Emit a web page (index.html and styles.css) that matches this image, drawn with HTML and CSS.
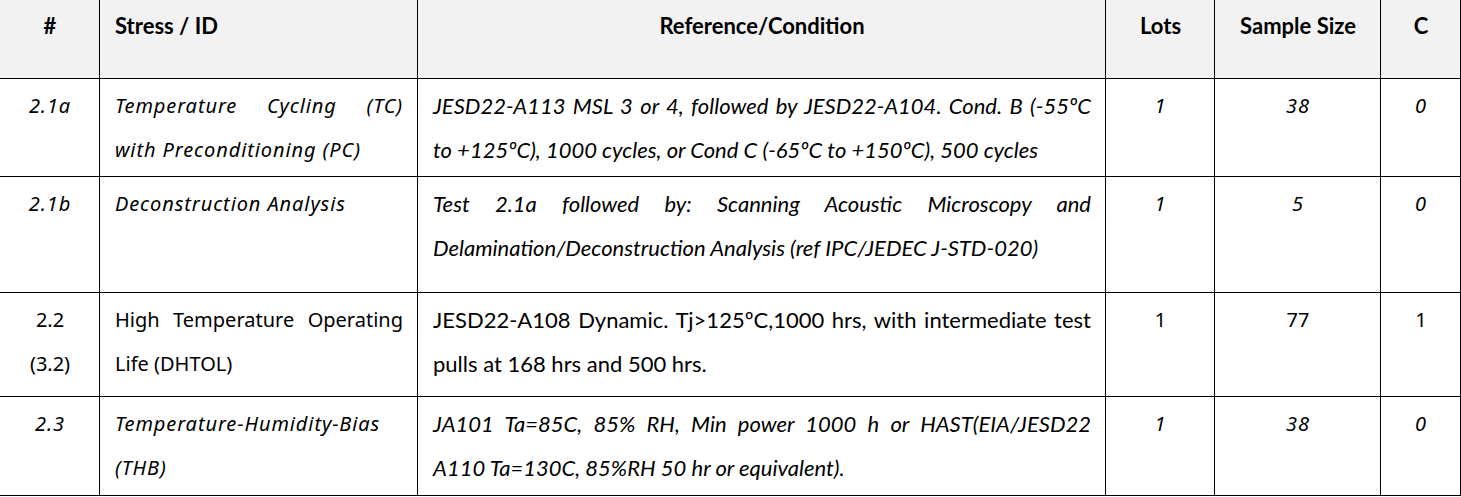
FILE: index.html
```html
<!DOCTYPE html>
<html>
<head>
<meta charset="utf-8">
<link rel="stylesheet" href="styles.css">
</head>
<body>
<table class="qual">
  <colgroup>
    <col class="c-num"><col class="c-stress"><col class="c-ref"><col class="c-lots"><col class="c-size"><col class="c-c">
  </colgroup>
  <thead>
    <tr class="row-head">
      <th class="center">#</th>
      <th class="left">Stress / ID</th>
      <th class="center">Reference/Condition</th>
      <th class="center">Lots</th>
      <th class="center">Sample Size</th>
      <th class="center">C</th>
    </tr>
  </thead>
  <tbody>
    <tr class="row-1 it">
      <td class="num">2.1a</td>
      <td class="stress">Temperature Cycling (TC) with Preconditioning (PC)</td>
      <td class="ref">JESD22-A113 MSL 3 or 4, followed by JESD22-A104. Cond. B (-55ºC to +125ºC), 1000 cycles, or Cond C (-65ºC to +150ºC), 500 cycles</td>
      <td class="num">1</td>
      <td class="num">38</td>
      <td class="num">0</td>
    </tr>
    <tr class="row-2 it">
      <td class="num">2.1b</td>
      <td class="stress">Deconstruction Analysis</td>
      <td class="ref">Test 2.1a followed by: Scanning Acoustic Microscopy and Delamination/Deconstruction Analysis (ref IPC/JEDEC J-STD-020)</td>
      <td class="num">1</td>
      <td class="num">5</td>
      <td class="num">0</td>
    </tr>
    <tr class="row-3">
      <td class="num">2.2<br>(3.2)</td>
      <td class="stress">High Temperature Operating Life (DHTOL)</td>
      <td class="ref">JESD22-A108 Dynamic. Tj&gt;125ºC,1000 hrs, with intermediate test pulls at 168 hrs and 500 hrs.</td>
      <td class="num">1</td>
      <td class="num">77</td>
      <td class="num">1</td>
    </tr>
    <tr class="row-4 it">
      <td class="num">2.3</td>
      <td class="stress">Temperature-Humidity-Bias (THB)</td>
      <td class="ref">JA101 Ta=85C, 85% RH, Min power 1000 h or HAST(EIA/JESD22 A110 Ta=130C, 85%RH 50 hr or equivalent).</td>
      <td class="num">1</td>
      <td class="num">38</td>
      <td class="num">0</td>
    </tr>
  </tbody>
</table>
</body>
</html>
```

FILE: styles.css
```css
html, body {
  margin: 0;
  padding: 0;
  background: #ffffff;
}

.qual {
  border-collapse: collapse;
  table-layout: fixed;
  width: 1461px;
  margin: -1px 0 0 -1px;
  color: #000000;
}

.c-num { width: 100px; }
.c-stress { width: 318px; }
.c-ref { width: 688px; }
.c-lots { width: 109px; }
.c-size { width: 166px; }
.c-c { width: 80px; }

.qual th,
.qual td {
  border: 1px solid #000000;
  vertical-align: top;
  padding: 5px 14px 0 15px;
  line-height: 44px;
}

.qual th {
  background: #f2f2f2;
  font-family: "Lato", "Liberation Sans", sans-serif;
  font-weight: 700;
  font-size: 22px;
  padding-top: 4px;
}

.qual th.center { text-align: center; }
.qual th.left { text-align: left; }

.row-head { height: 79px; }
.row-1 { height: 98px; }
.row-2 { height: 116px; }
.row-3 { height: 104px; }
.row-4 { height: 99px; }

.num {
  font-family: "Noto Sans", "DejaVu Sans", sans-serif;
  font-size: 20px;
  text-align: center;
}

.stress {
  font-family: "Noto Sans", "DejaVu Sans", sans-serif;
  font-size: 20px;
  text-align: justify;
}

.ref {
  font-family: "Lato", "Liberation Sans", sans-serif;
  font-size: 22px;
  text-align: justify;
}

.it td { font-style: italic; }

.it .num,
.it .stress {
  letter-spacing: 0.9px;
}
```
